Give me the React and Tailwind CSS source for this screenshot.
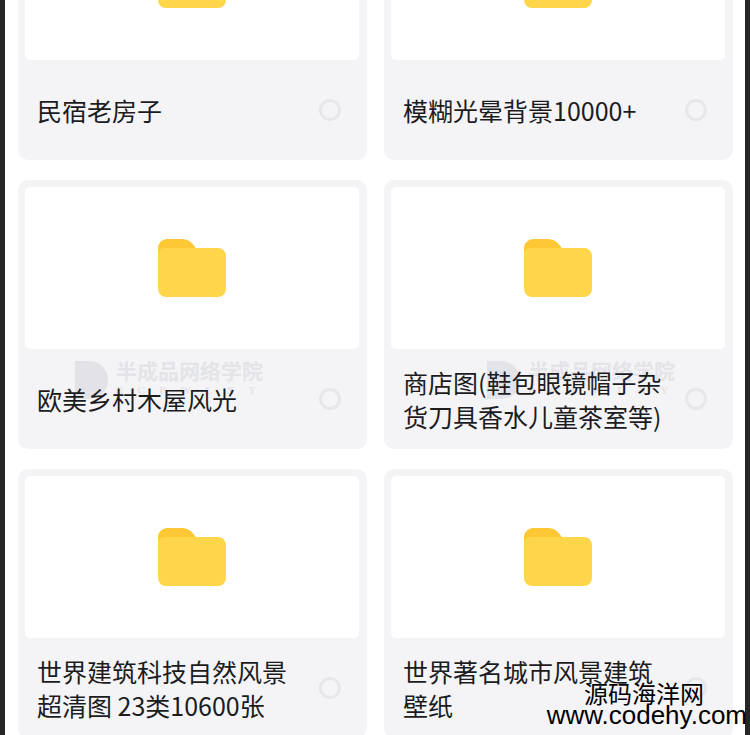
const folders = [
  { name: ["民宿老房子"] },
  { name: ["模糊光晕背景10000+"] },
  { name: ["欧美乡村木屋风光"], mark: "left-[57px]" },
  { name: ["商店图(鞋包眼镜帽子杂", "货刀具香水儿童茶室等)"], mark: "left-[103px]" },
  { name: ["世界建筑科技自然风景", "超清图 23类10600张"] },
  { name: ["世界著名城市风景建筑", "壁纸"] },
];

function FolderIcon() {
  return (
    <svg width="68" height="58" viewBox="0 0 68 58">
      <path d="M0 9a9 9 0 0 1 9-9h14c6 0 10 2 14 8l2 3H8L0 16z" fill="#fdc833" />
      <path d="M0 15c0-4 3-6 7-6h53a8 8 0 0 1 8 8v33a8 8 0 0 1-8 8H8a8 8 0 0 1-8-8z" fill="#ffd54a" />
    </svg>
  );
}

function Watermark({ position }) {
  return (
    <div className={`absolute top-[177px] ${position} flex items-start gap-[8px] opacity-70 pointer-events-none`}>
      <div className="w-[33px] h-[38px] mt-[4px] rounded-r-full bg-[#dcdce1]" />
      <div className="flex flex-col">
        <span className="text-[21px] leading-[26px] font-bold text-[#dcdde2]">半成品网络学院</span>
        <span className="text-[11px] leading-[14px] font-bold tracking-[14px] text-[#dcdde2] font-['Liberation_Serif',serif]">BCPWLXY</span>
      </div>
    </div>
  );
}

function FolderCard({ item }) {
  return (
    <div className="relative h-[269px] rounded-[10px] bg-[#f4f4f7] overflow-hidden flex flex-col">
      <div className="h-[162px] ml-[7px] mr-[8px] mt-[7px] bg-white rounded-[5px] shrink-0 flex items-center justify-center">
        <FolderIcon />
      </div>
      {item.mark && <Watermark position={item.mark} />}
      <div className="relative flex-1 flex items-center pl-[19px] pr-[26px]">
        <div className="flex-1 text-[25px] leading-[34px] text-[#1c1c1e] whitespace-nowrap">
          {item.name.map(line => (
            <div key={line}>{line}</div>
          ))}
        </div>
        <div className="w-[22px] h-[22px] rounded-full border-[3px] border-[#e6e7ea] shrink-0" />
      </div>
    </div>
  );
}

export default function App() {
  return (
    <div className="relative w-[750px] h-[735px] overflow-hidden bg-white font-['Noto_Sans_CJK_SC','Noto_Sans',sans-serif]">
      <div className="grid grid-cols-2 gap-x-[17px] gap-y-[20px] -mt-[109px] pl-[18px] pr-[17px]">
        {folders.map(item => (
          <FolderCard key={item.name[0]} item={item} />
        ))}
      </div>

      {/* dark edges of the screen recording */}
      <div className="absolute inset-y-0 left-0 w-[5px] bg-[#262626]" />
      <div className="absolute inset-y-0 right-0 w-[5px] bg-[#262626]" />

      {/* site stamp */}
      <div className="absolute right-[3px] bottom-[7px] flex flex-col items-end text-black">
        <span className="mr-[43px] text-[24px] leading-[18px]">源码海洋网</span>
        <span className="text-[26px] leading-[26px] font-['Liberation_Sans',sans-serif]">www.codehy.com</span>
      </div>
    </div>
  );
}
